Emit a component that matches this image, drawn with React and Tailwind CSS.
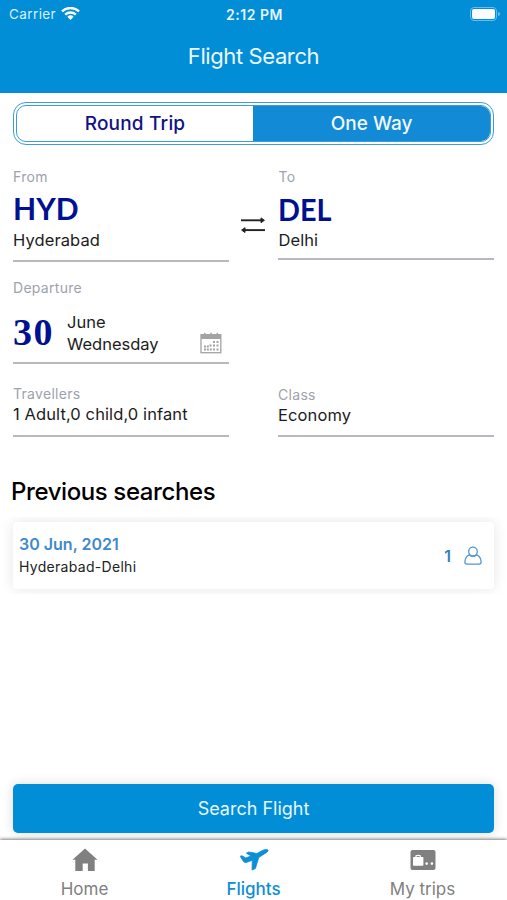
const CODE = "origin-left font-['Lato',sans-serif] text-[31px] leading-[34px] font-bold text-[#00118f]";

function WifiIcon() {
  return (
    <svg width="19" height="14" viewBox="0 0 19 14" fill="none" stroke="#fff" strokeWidth="2.4">
      <path d="M1 4.4a12.300 12.300 0 0 1 17 0" />
      <path d="M4.200 7.600a7.700 7.700 0 0 1 10.600 0" />
      <path d="M9.500 12.900 6.400 9.800a4.500 4.500 0 0 1 6.200 0z" fill="#fff" stroke="none" />
    </svg>
  );
}

function SwapIcon() {
  return (
    <svg width="24" height="16" viewBox="0 0 24 16" stroke="#222" fill="#222" strokeWidth="1.9">
      <path d="M0 3.3h21" />
      <path d="M20 .9 23.400 3.300 20 5.700z" strokeWidth="1" />
      <path d="M3 13.100h21" />
      <path d="M4 10.700.6 13.100 4 15.500z" strokeWidth="1" />
    </svg>
  );
}

function CalendarIcon() {
  const dots = [
    [13, 9], [16.5, 9],
    [9.5, 12.5], [13, 12.5], [16.5, 12.5],
    [4, 13.5], [6.8, 13.5],
    [4, 16.5], [6.8, 16.5], [9.8, 16.5], [13, 16.5], [16.5, 16.5],
  ];
  return (
    <svg width="22" height="22" viewBox="0 0 22 22" fill="#a3a3a3">
      <rect x="1" y="2.7" width="19.8" height="18" fill="none" stroke="#a3a3a3" strokeWidth="1.3" />
      <path d="M1 2.500h20v4.500H1z" />
      <path d="M4 .7h1.500v3.300H4zM10.300.7h1.500v3.300h-1.500zM16.600.7h1.500v3.300h-1.500z" />
      {dots.map(([x, y]) => (
        <rect key={`${x}-${y}`} x={x} y={y} width="2" height="2" />
      ))}
    </svg>
  );
}

function PersonIcon() {
  return (
    <svg width="18" height="20" viewBox="0 0 18 20" fill="none" stroke="#5297ce" strokeWidth="1.3">
      <circle cx="9" cy="5.500" r="4.300" />
      <path d="M5.200 8.900C2.300 10.200 1 12.700.9 16.100c0 1.200.7 2 1.900 2h12.400c1.200 0 1.900-.8 1.900-2-.1-3.400-1.400-5.900-4.300-7.200-2.200 1.700-5.400 1.700-7.600 0z" />
    </svg>
  );
}

function HomeIcon() {
  return (
    <svg width="26" height="24" viewBox="0 0 26 24" fill="#808080">
      <path d="M13 .5 25.500 11.700H22.700V23H15.900V15.500H10.700V23H3.300V11.700H.5z" />
    </svg>
  );
}

function PlaneIcon() {
  return (
    <svg width="30" height="24" viewBox="0 0 30 24" fill="#0e8ed5" stroke="#0e8ed5" strokeWidth=".8" strokeLinejoin="round">
      <path d="M1.200 8.200 3 7.800l3.800 2.100 5.300-2-4.800-2.700 2.400-1.200 8.200 1.500 5.900-3.200c2.400-1 4.700-1 5.200-.3.500 1-1.200 2.500-3.400 3.700l-5.800 3.800-3.400 11-3.400 1.600.3-9.800-5.500 2c-1.500.5-2.500.3-3.300-.7z" />
    </svg>
  );
}

function TripsIcon() {
  return (
    <svg width="26" height="22" viewBox="0 0 26 22">
      <rect x=".5" y="1" width="25" height="20" rx="2" fill="#808080" />
      <rect x="3" y="8" width="10.400" height="8.700" rx=".8" fill="#fff" />
      <path d="M6 8V6.800q2-1 4.300 0V8" fill="none" stroke="#fff" strokeWidth="1.200" />
      <circle cx="16.700" cy="14.600" r="1.300" fill="#fff" />
      <circle cx="21.900" cy="14.600" r="1.300" fill="#fff" />
    </svg>
  );
}

function Field({ label, value, code, className }) {
  return (
    <div className={`border-b-2 border-[#b6b9c2] ${className}`}>
      <p className="text-[14px] leading-[18px] tracking-[0.3px] text-[#9da2ae]">{label}</p>
      {code}
      <p className="text-[16.5px] leading-[22px] tracking-[0.1px] text-[#1c1c1c]">{value}</p>
    </div>
  );
}

function Tab({ icon, label, active }) {
  return (
    <div className={`flex flex-1 flex-col items-center ${active ? "text-[#0e8ed5]" : "text-[#808080]"}`}>
      <div className="flex h-[26px] items-center">{icon}</div>
      <span className={`mt-[5px] text-[17px] leading-[22px] ${active ? "font-medium" : ""}`}>{label}</span>
    </div>
  );
}

export default function App() {
  return (
    <main className="flex h-[900px] w-[507px] flex-col overflow-hidden bg-white font-['Inter',sans-serif]">
      <header className="h-[93px] shrink-0 bg-[#018ed7] text-white">
        <div className="grid h-[28px] grid-cols-3 items-center pr-[7px] pl-[9px]">
          <div className="flex items-center gap-[5px]">
            <span className="text-[13.5px] tracking-[0.4px] text-[#d9f0fc]">Carrier</span>
            <WifiIcon />
          </div>
          <span className="text-center text-[14px] font-semibold tracking-[0.5px] text-[#e4f5fd]">2:12 PM</span>
          <div className="flex items-center justify-end gap-px">
            <div className="h-[14px] w-[27px] rounded-[4px] border border-[#68bce9] p-px">
              <div className="h-full rounded-[2px] bg-white" />
            </div>
            <div className="h-[4px] w-[2px] rounded-r bg-[#68bce9]" />
          </div>
        </div>
        <h1 className="mt-[14px] text-center text-[22px] leading-[28px] tracking-[-0.4px] text-[#edf8fd]">
          Flight Search
        </h1>
      </header>

      <div className="mx-[13px] mt-[9px] h-[43px] shrink-0 rounded-[13px] border-[1.5px] border-[#3b9ddb] p-[2px]">
        <div className="flex h-full overflow-hidden rounded-[10px] border border-[#3b9ddb] text-[19px] font-medium">
          <button className="w-[236px] pt-[2px] tracking-[0.2px] text-[#121189]">Round Trip</button>
          <button className="flex-1 bg-[#128ad5] pt-[2px] text-[#f1f8fd]">One Way</button>
        </div>
      </div>

      <section className="mx-[13px] mt-[23px] flex shrink-0 items-start">
        <Field
          label="From"
          value="Hyderabad"
          className="h-[94px] w-[216px]"
          code={<p className={`mt-[5px] mb-[4px] scale-x-[0.97] ${CODE}`}>HYD</p>}
        />
        <div className="flex w-[50px] justify-center pt-[49px]">
          <SwapIcon />
        </div>
        <Field
          label="To"
          value="Delhi"
          className="h-[92px] w-[216px]"
          code={<p className={`mt-[6px] mb-[3px] scale-x-[0.93] ${CODE}`}>DEL</p>}
        />
      </section>

      <section className="mt-[17px] ml-[13px] h-[85px] w-[216px] shrink-0 border-b-2 border-[#b6b9c2]">
        <p className="text-[14px] leading-[18px] tracking-[0.3px] text-[#9da2ae]">Departure</p>
        <div className="mt-[14px] flex">
          <p className="w-[54px] font-['Liberation_Serif',serif] text-[38px] leading-[42px] font-bold tracking-[1.5px] text-[#00118f]">
            30
          </p>
          <div className="text-[16.5px] leading-[22px] text-[#1c1c1c]">
            <p>June</p>
            <p>Wednesday</p>
          </div>
          <div className="mt-[21px] mr-[7px] ml-auto">
            <CalendarIcon />
          </div>
        </div>
      </section>

      <section className="mx-[13px] mt-[21px] flex shrink-0 justify-between">
        <Field label="Travellers" value="1 Adult,0 child,0 infant" className="h-[52px] w-[216px]" />
        <Field label="Class" value="Economy" className="h-[52px] w-[216px] pt-px" />
      </section>

      <h2 className="mt-[39px] ml-[11px] shrink-0 text-[24px] leading-[32px] font-medium tracking-[-0.4px] text-black">
        Previous searches
      </h2>

      <div className="mt-[9px] shrink-0 overflow-hidden px-[13px] py-[5px]">
        <div className="flex h-[67px] items-center justify-between rounded-[4px] bg-white pr-[12px] pl-[6px] shadow-[0_0_14px_#0000001a]">
          <div>
            <p className="text-[16px] leading-[22px] font-semibold text-[#3f8aca]">30 Jun, 2021</p>
            <p className="mt-px text-[14px] leading-[22px] tracking-[0.3px] text-[#222]">Hyderabad-Delhi</p>
          </div>
          <div className="flex items-center gap-[13px] text-[16px] font-semibold text-[#347fbd]">
            <span>1</span>
            <PersonIcon />
          </div>
        </div>
      </div>

      <div className="mt-auto shrink-0 px-[13px] pb-[7px]">
        <button className="h-[49px] w-full rounded-[5px] bg-[#018ed7] text-[18px] text-[#e8f6fd] shadow-[0_0_12px_#00000024]">
          Search Flight
        </button>
      </div>

      <nav className="relative flex h-[60px] shrink-0 bg-white pt-[7px] shadow-[0_-1px_3px_#00000080]">
        <Tab icon={<HomeIcon />} label="Home" />
        <Tab icon={<PlaneIcon />} label="Flights" active />
        <Tab icon={<TripsIcon />} label="My trips" />
      </nav>
    </main>
  );
}
